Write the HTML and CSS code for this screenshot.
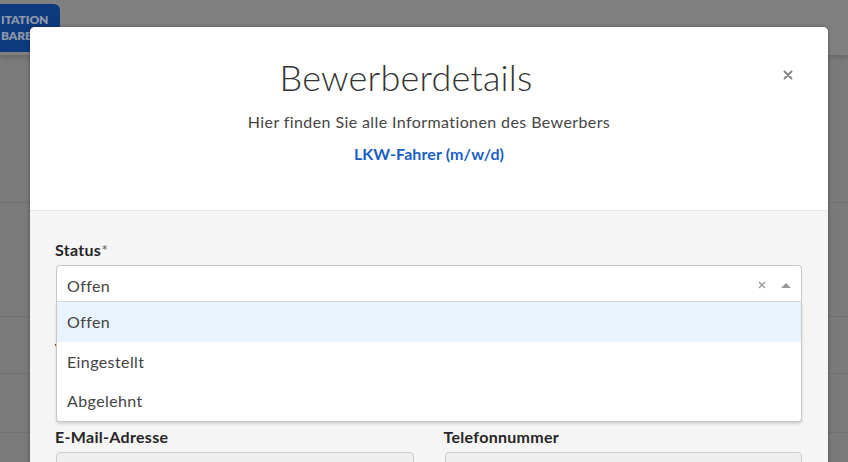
FILE: index.html
```html
<!DOCTYPE html>
<html lang="de">
<head>
<meta charset="utf-8">
<title>Bewerberdetails</title>
<link rel="stylesheet" href="styles.css">
</head>
<body>
<div class="page">
  <div class="topbar">
    <div class="brand"><span>ITATION</span><span>BARE</span></div>
  </div>
  <div class="rows">
    <div class="row r1"></div>
    <div class="row r2"></div>
    <div class="row r3"></div>
    <div class="row r4"></div>
  </div>
</div>
<div class="overlay">
  <div class="modal">
    <div class="modal-header">
      <h1 class="title">Bewerberdetails</h1>
      <p class="subtitle">Hier finden Sie alle Informationen des Bewerbers</p>
      <a class="job">LKW-Fahrer (m/w/d)</a>
      <button class="close" aria-label="Schließen">
        <svg width="10" height="10" viewBox="0 0 10 10"><path d="M1.5 1.5L8.5 8.5M8.5 1.5L1.5 8.5" stroke="#888" stroke-width="2" stroke-linecap="round"/></svg>
      </button>
    </div>
    <div class="modal-body">
      <div class="group status-group">
        <label class="label">Status<span class="req">*</span></label>
        <div class="select">
          <div class="select-value">
            <span>Offen</span>
            <span class="clear">
              <svg width="8" height="8" viewBox="0 0 8 8"><path d="M1 1L7 7M7 1L1 7" stroke="#999" stroke-width="1.3"/></svg>
            </span>
            <span class="arrow"></span>
          </div>
          <ul class="menu">
            <li class="opt active">Offen</li>
            <li class="opt">Eingestellt</li>
            <li class="opt">Abgelehnt</li>
          </ul>
        </div>
      </div>
      <div class="cols hidden-row">
        <div class="group">
          <label class="label">Vorname</label>
          <div class="input"></div>
        </div>
        <div class="group">
          <label class="label">Nachname</label>
          <div class="input"></div>
        </div>
      </div>
      <div class="cols">
        <div class="group">
          <label class="label">E-Mail-Adresse</label>
          <div class="input"></div>
        </div>
        <div class="group">
          <label class="label">Telefonnummer</label>
          <div class="input"></div>
        </div>
      </div>
    </div>
  </div>
</div>
</body>
</html>
```

FILE: styles.css
```css
* { box-sizing: border-box; }
html, body { margin: 0; padding: 0; }
body {
  width: 848px;
  height: 462px;
  overflow: hidden;
  position: relative;
  background: #7a7a7a;
  font-family: Lato, "Open Sans", sans-serif;
}
.page { height: 100%; }
.topbar {
  height: 55px;
  background: #808080;
  box-shadow: 0 2px 6px rgba(0,0,0,0.18);
  padding-top: 4px;
}
.brand {
  width: 60px;
  height: 48px;
  background: #0d3a7e;
  border-radius: 0 6px 0 0;
  overflow: hidden;
  display: flex;
  flex-direction: column;
  align-items: flex-start;
  justify-content: center;
  padding-left: 1px;
  color: #8c97aa;
  font-weight: 800;
  font-size: 12px;
  line-height: 16px;
  letter-spacing: -0.1px;
  white-space: nowrap;
}
.rows { display: flex; flex-direction: column; }
.row { border-bottom: 1px solid #6f6f6f; }
.r1 { height: 148px; }
.r2 { height: 114px; }
.r3 { height: 57px; }
.r4 { height: 59px; }

.overlay {
  position: absolute;
  inset: 0;
  padding: 27px 20px 0 30px;
}
.modal {
  width: 798px;
  background: #f5f5f5;
  border-radius: 5px 5px 0 0;
  box-shadow: 0 0 4px rgba(0,0,0,0.35);
  overflow: hidden;
  height: 460px;
}
.modal-header {
  position: relative;
  background: #fff;
  height: 184px;
  border-bottom: 1px solid #e6e6e6;
  display: flex;
  flex-direction: column;
  align-items: center;
  padding-top: 28px;
}
.title {
  margin: 0 46px 0 0;
  font-weight: 300;
  font-size: 36px;
  line-height: 44px;
  color: #333;
  letter-spacing: 0.2px;
}
.subtitle {
  margin: 13px 0 0;
  font-size: 16px;
  line-height: 20px;
  letter-spacing: 0.4px;
  color: #444;
}
.job {
  margin-top: 12px;
  font-size: 16px;
  line-height: 20px;
  font-weight: 700;
  color: #1a5fc4;
  letter-spacing: 0.1px;
}
.close {
  position: absolute;
  top: 43px;
  right: 35px;
  background: none;
  border: 0;
  padding: 0;
  width: 10px;
  height: 10px;
  display: flex;
}
.modal-body {
  padding: 29px 26px 0;
}
.group { display: flex; flex-direction: column; }
.label {
  font-size: 16px;
  line-height: 20px;
  font-weight: 700;
  color: #262626;
  margin-bottom: 5px;
  margin-left: -1px;
  letter-spacing: 0.3px;
}
.req { font-weight: 400; color: #666; }
.status-group { margin-bottom: 37px; }
.select { position: relative; }
.select-value {
  height: 37px;
  background: #fff;
  border: 1px solid #c8c8c8;
  border-bottom-color: #d8d8d8;
  border-radius: 4px 4px 0 0;
  display: flex;
  align-items: center;
  padding: 3px 10px 0 10px;
  font-size: 16px;
  letter-spacing: 0.4px;
  color: #444;
}
.select-value span:first-child { flex: 1; }
.clear { display: flex; margin-right: 15px; }
.arrow {
  width: 0; height: 0;
  border-left: 5px solid transparent;
  border-right: 5px solid transparent;
  border-bottom: 5px solid #999;
  margin-right: 0;
}
.menu {
  position: absolute;
  left: 0; right: 0;
  top: 37px;
  margin: 0;
  padding: 0;
  list-style: none;
  background: #fff;
  border: 1px solid #c8c8c8;
  border-top: 0;
  border-radius: 0 0 4px 4px;
  box-shadow: 0 2px 3px rgba(0,0,0,0.15);
  z-index: 2;
}
.opt {
  height: 39.5px;
  display: flex;
  align-items: center;
  padding: 0 10px;
  font-size: 16px;
  letter-spacing: 0.4px;
  color: #444;
}
.opt.active { background: #e9f3fd; }
.cols {
  display: grid;
  grid-template-columns: 1fr 1fr;
  column-gap: 31px;
}
.hidden-row { margin-bottom: 25px; }
.input {
  height: 38px;
  background: #eee;
  border: 1px solid #ccc;
  border-radius: 4px;
}
```
